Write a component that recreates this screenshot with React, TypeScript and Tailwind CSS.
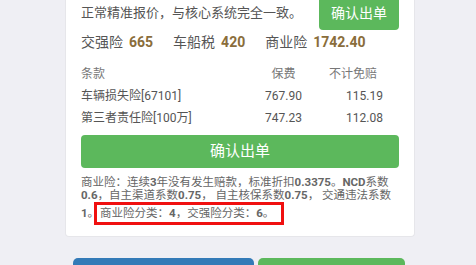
import React from 'react';

const font = { fontFamily: 'Roboto, "Noto Sans CJK SC", sans-serif' };

const rows = [
  { name: '车辆损失险[67101]', fee: '767.90', extra: '115.19' },
  { name: '第三者责任险[100万]', fee: '747.23', extra: '112.08' },
];

function Total({ label, value }: { label: string; value: string }) {
  return (
    <div className="flex items-center gap-[6px]">
      <span className="text-[#555]">{label}</span>
      <span className="font-bold text-[#8a6d3b]">{value}</span>
    </div>
  );
}

export default function App() {
  return (
    <div
      className="w-[476px] h-[265px] overflow-hidden bg-[#efeff4] flex flex-col"
      style={font}
    >
      <div className="ml-[65px] w-[350px] -mt-[4px] bg-white rounded-b-[4px] border border-t-0 border-[#e6e6ea] px-[15px] pb-[11px] flex flex-col">
        <div className="flex items-center justify-between h-[34px]">
          <span className="text-[13px] text-[#555]">正常精准报价，与核心系统完全一致。</span>
          <button className="w-[80px] h-[34px] rounded-[4px] bg-[#5cb85c] text-white text-[14px]">
            确认出单
          </button>
        </div>

        <div className="mt-[2px] flex items-center gap-[20px] text-[14px] leading-[20px]">
          <Total label="交强险" value="665" />
          <Total label="车船税" value="420" />
          <Total label="商业险" value="1742.40" />
        </div>

        <div className="mt-[11px] text-[12px] leading-[22px]">
          <div className="grid grid-cols-[165px_75px_80px] text-[#777]">
            <span>条款</span>
            <span className="text-center">保费</span>
            <span className="pl-[8px]">不计免赔</span>
          </div>
          {rows.map((r) => (
            <div key={r.name} className="grid grid-cols-[165px_75px_80px] text-[#555]">
              <span>{r.name}</span>
              <span className="text-center">{r.fee}</span>
              <span className="pl-[25px]">{r.extra}</span>
            </div>
          ))}
        </div>

        <button className="mt-[6px] h-[33px] w-full rounded-[4px] bg-[#5cb85c] text-white text-[15px]">
          确认出单
        </button>

        <div className="mt-[8px] text-[11.5px] leading-[13px] text-[#666]">
          <div className="whitespace-nowrap">
            商业险：连续<b>3</b>年没有发生赔款，标准折扣<b>0.3375</b>。<b>NCD</b>系数
          </div>
          <div className="whitespace-nowrap">
            <b>0.6</b>，自主渠道系数<b>0.75</b>， 自主核保系数<b>0.75</b>， 交通违法系数
          </div>
          <div className="flex items-center whitespace-nowrap">
            <b>1</b>。
            <span className="-ml-[5px] border-[3px] border-[#f01010] h-[23px] pl-[3px] pr-[7px] flex items-center">
              商业险分类：<b>4</b>，交强险分类：<b>6</b>。
            </span>
          </div>
        </div>
      </div>

      <div className="mt-[21px] ml-[73px] flex gap-[4px]">
        <button className="w-[181px] h-[40px] rounded-[5px] bg-[#337ab7]" />
        <button className="w-[147px] h-[40px] rounded-[5px] bg-[#5cb85c]" />
      </div>
    </div>
  );
}
